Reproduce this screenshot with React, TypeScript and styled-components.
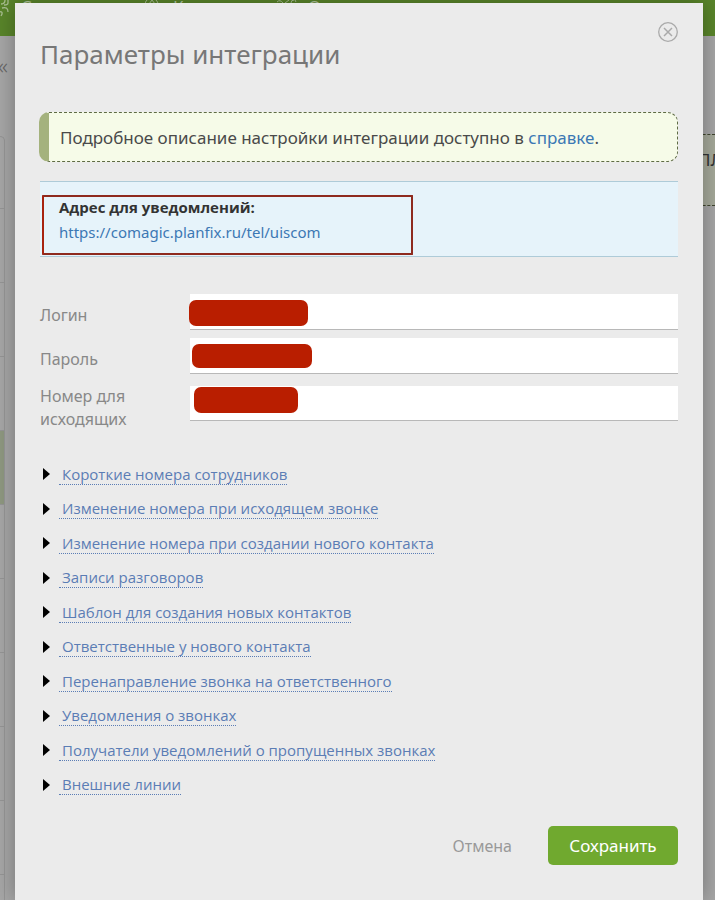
import React from "react";
import styled, { createGlobalStyle } from "styled-components";

const GlobalStyle = createGlobalStyle`
  * { box-sizing: border-box; }
  html, body, #root { height: 100%; margin: 0; }
  body {
    font-family: "Noto Sans", "Open Sans", sans-serif;
    color: #444;
    background: #a3a3a3;
  }
  button, input { font-family: inherit; }
`;

const Page = styled.div`
  position: relative;
  display: flex;
  min-height: 100%;
  padding: 3px 12px 0 15px;
  overflow: hidden;
`;

/* Dimmed application behind the dialog */
const Backdrop = styled.div`
  position: absolute;
  inset: 0;
  display: flex;
  flex-direction: column;
  background: #a6a6a6;
  overflow: hidden;
`;

const TopBar = styled.header`
  display: flex;
  flex: none;
  height: 36px;
  background: #59852a;
  color: #b4c8a0;
  font-size: 17px;
  line-height: 20px;
  overflow: hidden;

  svg { flex: none; display: block; }
`;

const TopItem = styled.div<{ $width: number }>`
  display: flex;
  flex: none;
  gap: 11px;
  width: ${(p) => p.$width}px;
  white-space: nowrap;

  span { margin-top: -3px; }
`;

const BackBody = styled.div`
  display: flex;
  flex: 1;
  justify-content: space-between;
`;

const Side = styled.aside`
  width: 12px;
`;

const Collapse = styled.div`
  height: 100px;
  padding-top: 14px;
  color: #666;
  font-size: 22px;
  font-weight: 300;
  line-height: 30px;
  margin-left: -2px;
`;

const SideList = styled.div`
  width: 5px;
  height: 780px;
  padding-top: 71px;
  border: solid #959595;
  border-width: 1px 1px 0 0;
  border-radius: 0 8px 0 0;
`;

const SideRow = styled.div<{ $active?: boolean }>`
  height: 74px;
  border-top: 1px solid #959595;
  background: ${(p) => (p.$active ? "#8e9880" : "transparent")};
`;

const SideNote = styled.div`
  width: 17px;
  height: 72px;
  margin-top: 98px;
  padding-top: 11px;
  border: dashed #3f452f;
  border-width: 1px 0;
  background: #a5a99a;
  color: #333;
  font-size: 17px;
  line-height: 28px;
  white-space: nowrap;
  overflow: hidden;
`;

const Dialog = styled.main`
  position: relative;
  flex: 1;
  min-width: 0;
  padding: 32px 25px 32px;
  background: #ebebeb;
  box-shadow: 0 0 20px rgba(0, 0, 0, 0.3);
`;

const Close = styled.button`
  position: absolute;
  top: 18px;
  right: 24px;
  padding: 0;
  border: 0;
  background: none;
  line-height: 0;
  cursor: pointer;
`;

const Title = styled.h1`
  margin: 0;
  color: #777;
  font-size: 26px;
  font-weight: 400;
  line-height: 38px;
`;

const Help = styled.p`
  margin: 39px 0 0 -1px;
  padding: 1px 10px 0 11px;
  border: 1px dashed #5f6b45;
  border-left: 10px solid #a4b27d;
  border-radius: 10px;
  background: #f6fbe8;
  color: #4a4a4a;
  font-size: 17px;
  line-height: 47px;
`;

const Link = styled.a`
  color: #3c78b4;
  text-decoration: none;
`;

const Address = styled.section`
  position: relative;
  margin-top: 19px;
  padding: 13px 19px 11px;
  border: solid #aecbd8;
  border-width: 1px 0;
  background: #e6f3fa;
  font-size: 15px;
  line-height: 25px;

  h2 {
    margin: 0;
    color: #333;
    font-family: "Open Sans", "Noto Sans", sans-serif;
    font-size: 15px;
    line-height: 25px;
  }
`;

const Marker = styled.div`
  position: absolute;
  top: 13px;
  left: 2px;
  width: 371px;
  height: 60px;
  border: 2px solid #8e2a1e;
  border-left-color: #a82410;
  border-radius: 1px;
  pointer-events: none;
`;

const Form = styled.form`
  display: grid;
  gap: 8px;
  margin-top: 37px;
`;

const Row = styled.div<{ $tall?: boolean }>`
  display: grid;
  grid-template-columns: 150px 1fr;
  align-items: start;
  margin-top: ${(p) => (p.$tall ? "3px" : "0")};

  label {
    padding-top: ${(p) => (p.$tall ? "0" : "10px")};
    padding-right: 40px;
    color: #888;
    font-size: 16px;
    line-height: 23px;
  }
`;

const Field = styled.div<{ $tall?: boolean }>`
  position: relative;
  margin-top: ${(p) => (p.$tall ? "1px" : "0")};
  height: ${(p) => (p.$tall ? "35px" : "36px")};
`;

const Input = styled.input`
  display: block;
  width: 100%;
  height: 100%;
  padding: 0 8px;
  border: 0;
  border-bottom: 1px solid #b8b8b8;
  border-radius: 0;
  background: #fff;
  font-size: 16px;
`;

const Cover = styled.span<{ $x: number; $y: number; $w: number; $h: number }>`
  position: absolute;
  left: ${(p) => p.$x}px;
  top: ${(p) => p.$y}px;
  width: ${(p) => p.$w}px;
  height: ${(p) => p.$h}px;
  border-radius: 7px;
  background: #b91e00;
`;

const Sections = styled.ul`
  display: grid;
  grid-auto-rows: 1fr;
  min-height: 345px;
  margin: 26px 0 0;
  padding: 0;
  list-style: none;

  li { display: flex; align-items: center; }
`;

const Toggle = styled.button`
  display: flex;
  align-items: center;
  gap: 9px;
  padding: 0 0 0 3px;
  border: 0;
  background: none;
  color: #5b7db5;
  font-family: "Open Sans", "Noto Sans", sans-serif;
  font-size: 15px;
  line-height: 20px;
  cursor: pointer;

  svg { flex: none; }

  span {
    padding-left: 3px;
    border-bottom: 1px dotted #5b7db5;
  }
`;

const Footer = styled.footer`
  display: flex;
  justify-content: flex-end;
  align-items: center;
  gap: 36px;
  margin-top: 24px;
`;

const Cancel = styled.button`
  padding: 0;
  border: 0;
  background: none;
  color: #999;
  font-size: 16px;
  cursor: pointer;
`;

const Save = styled.button`
  width: 130px;
  height: 39px;
  padding: 0;
  border: 0;
  border-radius: 5px;
  background: #70a92f;
  color: #fff;
  font-size: 17px;
  cursor: pointer;
`;

const fields = [
  { id: "login", label: "Логин", type: "text", cover: [-1, 6, 119, 26] },
  { id: "password", label: "Пароль", type: "password", cover: [2, 6, 120, 24] },
  { id: "number", label: "Номер для исходящих", type: "tel", cover: [4, 1, 104, 26], tall: true },
];

const sections = [
  "Короткие номера сотрудников",
  "Изменение номера при исходящем звонке",
  "Изменение номера при создании нового контакта",
  "Записи разговоров",
  "Шаблон для создания новых контактов",
  "Ответственные у нового контакта",
  "Перенаправление звонка на ответственного",
  "Уведомления о звонках",
  "Получатели уведомлений о пропущенных звонках",
  "Внешние линии",
];

export default function App() {
  return (
    <Page>
      <GlobalStyle />
      <Backdrop aria-hidden="true">
        <TopBar>
          <TopItem $width={145}>
            <svg width="10" height="20" fill="none" stroke="#a9bf92" strokeWidth="1.3">
              <path d="M1 4c3 0 4-1 4-4M8 0v3c0 2-2 2-4 2M2 8c4-1 6 0 6 4M0 12c2-1 3 1 1 4" />
            </svg>
            <span>С</span>
          </TopItem>
          <TopItem $width={132}>
            <svg width="17" height="20" fill="none" stroke="#a9bf92">
              <path d="M2 0Q0 2 0 4M4 4l3-4 3 4M11 0q2 2 2 4" />
            </svg>
            <span>К</span>
          </TopItem>
          <TopItem $width={60}>
            <svg width="20" height="20" fill="none" stroke="#a9bf92">
              <path d="M0 2q3-3 6 1M8 3l4-3M14 3q0-3 3-3M18 0l1 2" />
            </svg>
            <span>О</span>
          </TopItem>
        </TopBar>
        <BackBody>
          <Side>
            <Collapse>«</Collapse>
            <SideList>
              {Array.from({ length: 10 }, (_, i) => (
                <SideRow key={i} $active={i === 3} />
              ))}
            </SideList>
          </Side>
          <SideNote>ПЛ</SideNote>
        </BackBody>
      </Backdrop>

      <Dialog role="dialog" aria-labelledby="dialog-title">
        <Close type="button" aria-label="Закрыть">
          <svg width="22" height="22" viewBox="0 0 22 22" fill="none" stroke="#aaa" strokeWidth="1.3">
            <circle cx="11" cy="11" r="9.3" />
            <path d="M7 7l8 8M15 7l-8 8" strokeWidth="1.5" />
          </svg>
        </Close>
        <Title id="dialog-title">Параметры интеграции</Title>
        <Help>
          Подробное описание настройки интеграции доступно в <Link href="#help">справке</Link>.
        </Help>
        <Address>
          <h2>Адрес для уведомлений:</h2>
          <Link href="https://comagic.planfix.ru/tel/uiscom">https://comagic.planfix.ru/tel/uiscom</Link>
          <Marker />
        </Address>
        <Form>
          {fields.map((f) => (
            <Row key={f.id} $tall={f.tall}>
              <label htmlFor={f.id}>{f.label}</label>
              <Field $tall={f.tall}>
                <Input id={f.id} type={f.type} />
                <Cover $x={f.cover[0]} $y={f.cover[1]} $w={f.cover[2]} $h={f.cover[3]} />
              </Field>
            </Row>
          ))}
        </Form>
        <Sections>
          {sections.map((s) => (
            <li key={s}>
              <Toggle type="button" aria-expanded="false">
                <svg width="7" height="12" viewBox="0 0 7 12">
                  <path d="M0 0L7 6L0 12Z" fill="#000" />
                </svg>
                <span>{s}</span>
              </Toggle>
            </li>
          ))}
        </Sections>
        <Footer>
          <Cancel type="button">Отмена</Cancel>
          <Save type="button">Сохранить</Save>
        </Footer>
      </Dialog>
    </Page>
  );
}
